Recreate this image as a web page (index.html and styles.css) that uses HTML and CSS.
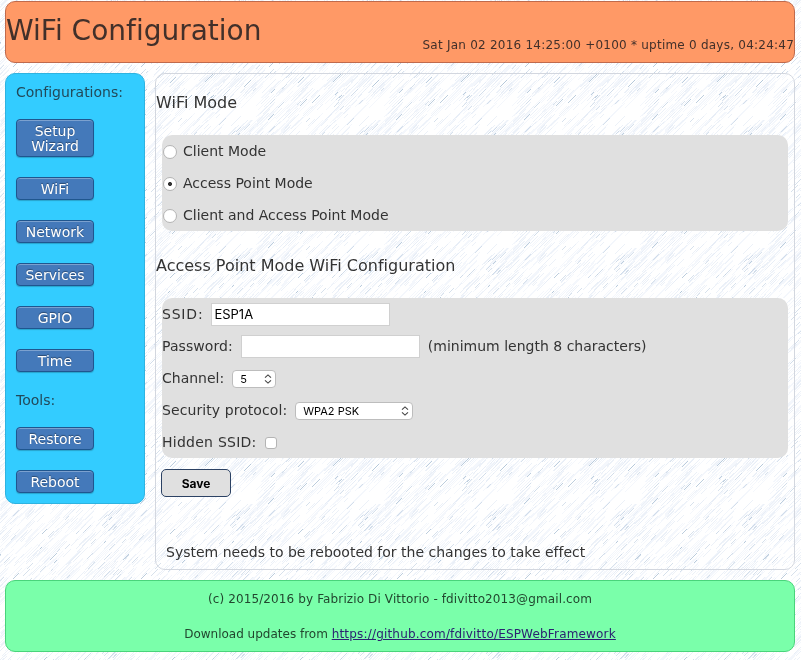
FILE: index.html
```
<!DOCTYPE html>
<html lang="en">
<head>
<meta charset="utf-8">
<title>WiFi Configuration</title>
<link rel="stylesheet" href="styles.css">
</head>
<body>
<svg class="backdrop" aria-hidden="true">
  <defs><pattern id="tile" width="128" height="128" patternUnits="userSpaceOnUse"></pattern></defs>
  <rect width="100%" height="100%" fill="url(#tile)"/>
</svg>
<header class="header">
  <h1>WiFi Configuration</h1>
  <div class="clock">Sat Jan 02 2016 14:25:00 +0100 * uptime 0 days, 04:24:47</div>
</header>
<div class="columns">
  <nav class="menu">
    <p>Configurations:</p>
    <a class="item">Setup Wizard</a>
    <a class="item">WiFi</a>
    <a class="item">Network</a>
    <a class="item">Services</a>
    <a class="item">GPIO</a>
    <a class="item">Time</a>
    <p class="tools">Tools:</p>
    <a class="item">Restore</a>
    <a class="item">Reboot</a>
  </nav>
  <main class="content">
    <h2>WiFi Mode</h2>
    <div class="group">
      <label class="row"><input type="radio" name="mode"><span>Client Mode</span></label>
      <label class="row"><input type="radio" name="mode" checked><span>Access Point Mode</span></label>
      <label class="row"><input type="radio" name="mode"><span>Client and Access Point Mode</span></label>
    </div>
    <h2 class="second">Access Point Mode WiFi Configuration</h2>
    <div class="group">
      <div class="row"><span class="ssid">SSID:</span><input class="field" type="text" value="ESP1A"></div>
      <div class="row"><span class="wide">Password:</span><input class="field" type="password"><span class="hint">(minimum length 8 characters)</span></div>
      <div class="row"><span>Channel:</span><span class="select channel">5<svg viewBox="0 0 8 10"><path d="M1 3.7 4 .9l3 2.8M1 6.3l3 2.8 3-2.8"/></svg></span></div>
      <div class="row"><span class="wide">Security protocol:</span><span class="select protocol">WPA2 PSK<svg viewBox="0 0 8 10"><path d="M1 3.7 4 .9l3 2.8M1 6.3l3 2.8 3-2.8"/></svg></span></div>
      <div class="row"><span class="hidden-label">Hidden SSID:</span><input type="checkbox"></div>
    </div>
    <button class="save">Save</button>
    <p class="note">System needs to be rebooted for the changes to take effect</p>
  </main>
</div>
<footer class="footer">
  <p>(c) 2015/2016 by Fabrizio Di Vittorio - fdivitto2013@gmail.com</p>
  <p class="download"><span>Download updates from </span><a href="#">https://github.com/fdivitto/ESPWebFramework</a></p>
</footer>
<script src="backdrop.js"></script>
</body>
</html>
```
FILE: styles.css
```
* { box-sizing: border-box; }
body {
  margin: 0;
  padding: 1px 6px 0 5px;
  height: 660px;
  overflow: hidden;
  background: #fff;
  color: #333;
  font: 14px/17px "DejaVu Sans", sans-serif;
  font-variant-ligatures: none;
}
h1, h2, p { margin: 0; font-weight: normal; }
.backdrop { position: fixed; inset: 0; width: 100%; height: 100%; z-index: -1; }
.header {
  height: 62px;
  border: 1px solid #c06a4c;
  border-radius: 10px;
  background: #ff9966;
  color: #42302a;
  padding: 10px 0 0;
  display: flex;
  justify-content: space-between;
}
h1 { font-size: 28px; line-height: 36px; padding-top: 1px; white-space: nowrap; }
.clock { font-size: 12px; letter-spacing: .23px; line-height: 16px; padding-top: 25px; white-space: nowrap; }
.columns { display: flex; align-items: flex-start; gap: 10px; margin-top: 10px; }
.menu {
  width: 140px;
  height: 431px;
  border: 1px solid #2fb3e0;
  border-radius: 10px;
  background: #33ccff;
  padding: 10px;
  color: #22495a;
}
.menu p { margin-bottom: -2px; }
.item {
  display: flex;
  align-items: center;
  justify-content: center;
  text-align: center;
  width: 78px;
  margin-top: 20px;
  padding: 4px 8px 2px;
  line-height: 15px;
  border: 1px solid #1f568f;
  border-radius: 4px;
  background: #4479ba;
  color: #fff;
  text-shadow: 0 -1px 1px rgba(0,0,0,.4);
  box-shadow: inset 0 1px 0 rgba(255,255,255,.3), 0 1px 1px rgba(0,0,0,.2);
}
.menu .tools { margin-top: 20px; }
.content {
  width: 640px;
  height: 497px;
  border: 1px solid #d3d7df;
  border-radius: 10px;
  padding: 19px 6px 0 5px;
}
h2 { font-size: 16px; line-height: 20px; margin-left: -5px; }
h2.second { margin-top: 25px; }
.group { margin: 22px 0 0 1px; background: #e0e0e0; border-radius: 10px; height: 96px; }
.second + .group { height: 160px; margin-top: 22px; }
.row { display: flex; align-items: center; height: 32px; }
.ssid { letter-spacing: .8px; }
.wide { letter-spacing: .08px; }
.hidden-label { letter-spacing: .25px; }
input[type=radio], input[type=checkbox] {
  appearance: none;
  flex: none;
  background: #fff;
  border: 1px solid #b4b4b4;
  margin: 0;
}
input[type=radio] { width: 14px; height: 14px; border-radius: 50%; margin: 2px 6px 0 1px; }
input[type=radio]:checked { background: radial-gradient(circle, #333 0 1.7px, #fff 2.3px); }
input[type=checkbox] { width: 12px; height: 12px; border-radius: 3px; margin: 2px 0 0 8px; }
.field {
  width: 179px;
  height: 23px;
  margin-left: 8px;
  padding: 0 2px;
  border: 1px solid #d0d0d0;
  background: #fff;
  font: 13px Inter, sans-serif;
  color: #000;
}
.hint { margin-left: 8px; }
.select {
  display: flex;
  align-items: center;
  justify-content: space-between;
  height: 18px;
  margin: 2px 0 0 8px;
  padding: 0 3px 0 7px;
  border: 1px solid #bdbdbd;
  border-radius: 4px;
  background: #fff;
  color: #000;
  font: 11px Inter, sans-serif;
}
.select svg { width: 8px; height: 10px; fill: none; stroke: #444; stroke-width: 1.1; }
.channel { width: 44px; }
.protocol { width: 118px; }
.save {
  display: block;
  width: 70px;
  height: 28px;
  margin-top: 11px;
  border: 1px solid #2c4264;
  border-radius: 5px;
  background: #e0e0e0;
  color: #000;
  font: bold 12px Inter, sans-serif;
}
.note { margin: 47px 0 0 5px; }
.footer {
  height: 72px;
  margin-top: 10px;
  border: 1px solid #49d47b;
  border-radius: 10px;
  background: #7affaa;
  color: #22472f;
  font-size: 12px;
  letter-spacing: .12px;
  line-height: 16px;
  padding-top: 10px;
  text-align: center;
}
.footer .download { margin-top: 19px; letter-spacing: 0; }
.footer a { color: #2b2370; letter-spacing: .18px; }
```
FILE: backdrop.js
```
// Fills the backdrop tile with thin diagonal strokes; each is repeated across the edges so that the tile is seamless.
const tile = document.getElementById('tile');
let seed = 7;
const rnd = () => (seed = (seed * 16807) % 2147483647) / 2147483647;
function strokes(count, min, max, width, color) {
  let d = '';
  for (let i = 0; i < count; i++) {
    const x = Math.floor(rnd() * 128), y = Math.floor(rnd() * 128);
    const n = Math.round(min + rnd() * (max - min));
    if (Math.hypot(x + n / 2 - 122, y - n / 2 - 112) < 14) continue;
    for (const ox of [-128, 0, 128]) for (const oy of [-128, 0, 128])
      d += `M${x + ox} ${y + oy}l${n} ${-n}`;
  }
  const p = document.createElementNS('http://www.w3.org/2000/svg', 'path');
  p.setAttribute('d', d);
  p.setAttribute('stroke', color);
  p.setAttribute('stroke-width', width);
  p.setAttribute('fill', 'none');
  tile.appendChild(p);
}
strokes(300, 6, 22, .8, '#f1f5fb');
strokes(220, 4, 14, .6, '#dfe8f4');
strokes(60, 2, 7, .6, '#bccddf');
strokes(18, 2, 9, .7, '#9fb8cf');
```
